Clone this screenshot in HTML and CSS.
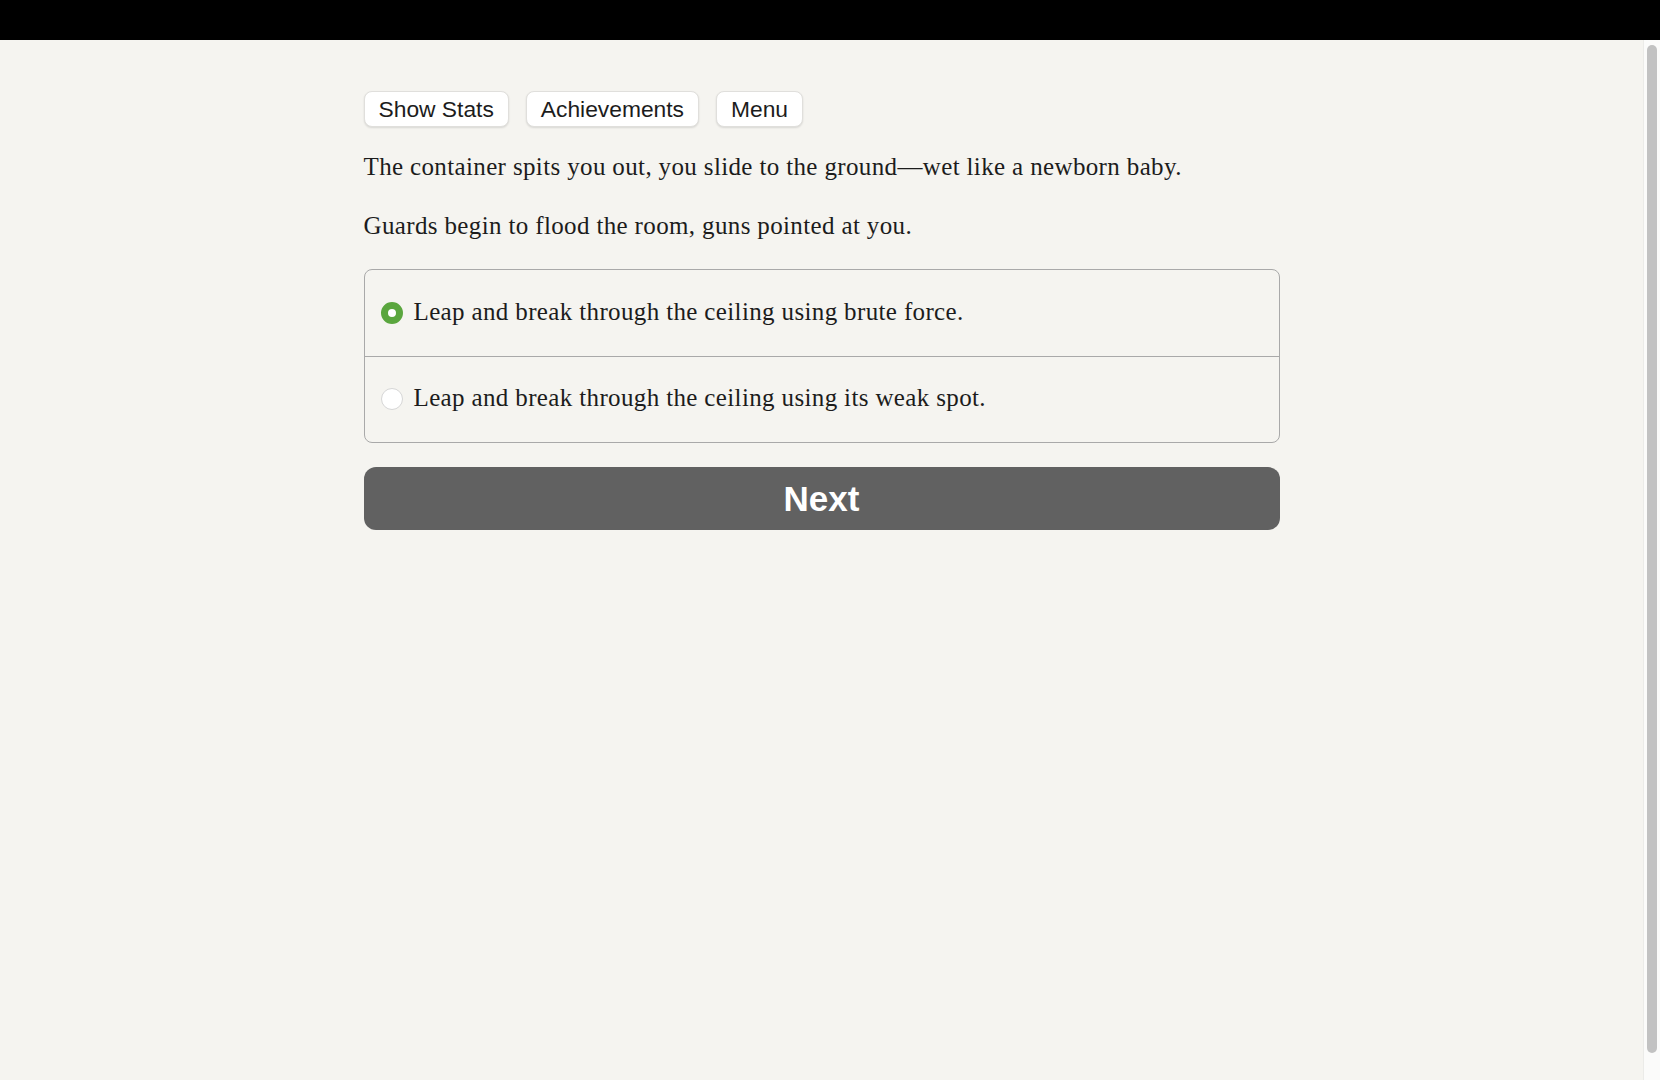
FILE: index.html
```html
<!DOCTYPE html>
<html lang="en">
<head>
<meta charset="utf-8">
<title>Game</title>
<link rel="stylesheet" href="styles.css">
</head>
<body>
<div class="topbar"></div>
<div class="viewport">
  <main class="scroller">
    <div class="container">
      <nav class="toolbar">
        <button class="tool-btn">Show Stats</button>
        <button class="tool-btn">Achievements</button>
        <button class="tool-btn">Menu</button>
      </nav>
      <p class="story">The container spits you out, you slide to the ground—wet like a newborn baby.</p>
      <p class="story">Guards begin to flood the room, guns pointed at you.</p>
      <div class="choices">
        <label class="choice">
          <span class="radio radio-on"></span>
          <span class="choice-text">Leap and break through the ceiling using brute force.</span>
        </label>
        <label class="choice">
          <span class="radio"></span>
          <span class="choice-text">Leap and break through the ceiling using its weak spot.</span>
        </label>
      </div>
      <button class="next-btn">Next</button>
    </div>
  </main>
  <div class="scrollrail"><div class="scrollthumb"></div></div>
</div>
</body>
</html>
```

FILE: styles.css
```css
html, body {
  margin: 0;
  padding: 0;
  height: 100%;
}
body {
  display: flex;
  flex-direction: column;
  background: #f5f4f0;
  overflow: hidden;
}
.topbar {
  height: 40px;
  flex: 0 0 40px;
  background: #000;
}
.viewport {
  flex: 1 1 auto;
  display: flex;
  min-height: 0;
}
.scroller {
  flex: 1 1 auto;
  overflow: hidden;
  background: #f5f4f0;
}
.scrollrail {
  box-sizing: border-box;
  flex: 0 0 17px;
  width: 17px;
  background: #fbfbfa;
  border-left: 1px solid #ebebe8;
  display: flex;
  flex-direction: column;
  padding: 5px 3px 27px 3px;
}
.scrollthumb {
  flex: 1 1 auto;
  background: #c2c2c2;
  border-radius: 5px;
}
.container {
  width: 916px;
  margin: 0 auto;
  padding-top: 51px;
}
.toolbar {
  display: flex;
  gap: 17px;
  margin-bottom: 23px;
}
.tool-btn {
  height: 36px;
  padding: 0 14px;
  background: #fff;
  border: 1px solid #e0dfdc;
  border-radius: 8px;
  box-shadow: 0 1px 2px rgba(0,0,0,0.12);
  font-family: "Liberation Sans", Arial, sans-serif;
  font-size: 22.8px;
  color: #1c1c1c;
  line-height: 34px;
}
.story {
  margin: 0 0 25px;
  font-family: "Liberation Serif", "Times New Roman", serif;
  font-size: 25px;
  letter-spacing: 0.36px;
  line-height: 33.6px;
  color: #1c1c1c;
}
.choices {
  margin-top: 27px;
  border: 1px solid #a9a9a9;
  border-radius: 8px;
  overflow: hidden;
}
.choice {
  display: flex;
  align-items: center;
  box-sizing: border-box;
  height: 86px;
  padding-left: 16px;
  padding-bottom: 3px;
  gap: 11px;
}
.choice + .choice {
  border-top: 1px solid #a9a9a9;
  height: 86px;
}
.radio {
  width: 20px;
  height: 20px;
  border-radius: 50%;
  background: #fff;
  border: 1px solid #d6d6d6;
  flex: 0 0 auto;
  margin-top: 2px;
}
.radio-on {
  width: 8px;
  height: 8px;
  background: #fff;
  border: 7px solid #5aa63e;
}
.choice-text {
  font-family: "Liberation Serif", "Times New Roman", serif;
  font-size: 25px;
  letter-spacing: 0.36px;
  line-height: 33.6px;
  color: #1c1c1c;
}
.next-btn {
  display: block;
  width: 100%;
  height: 63px;
  margin-top: 24px;
  border: none;
  border-radius: 12px;
  background: #616161;
  color: #fff;
  font-family: "Liberation Sans", Arial, sans-serif;
  font-weight: bold;
  font-size: 35px;
  line-height: 63px;
  padding: 0;
}
```
